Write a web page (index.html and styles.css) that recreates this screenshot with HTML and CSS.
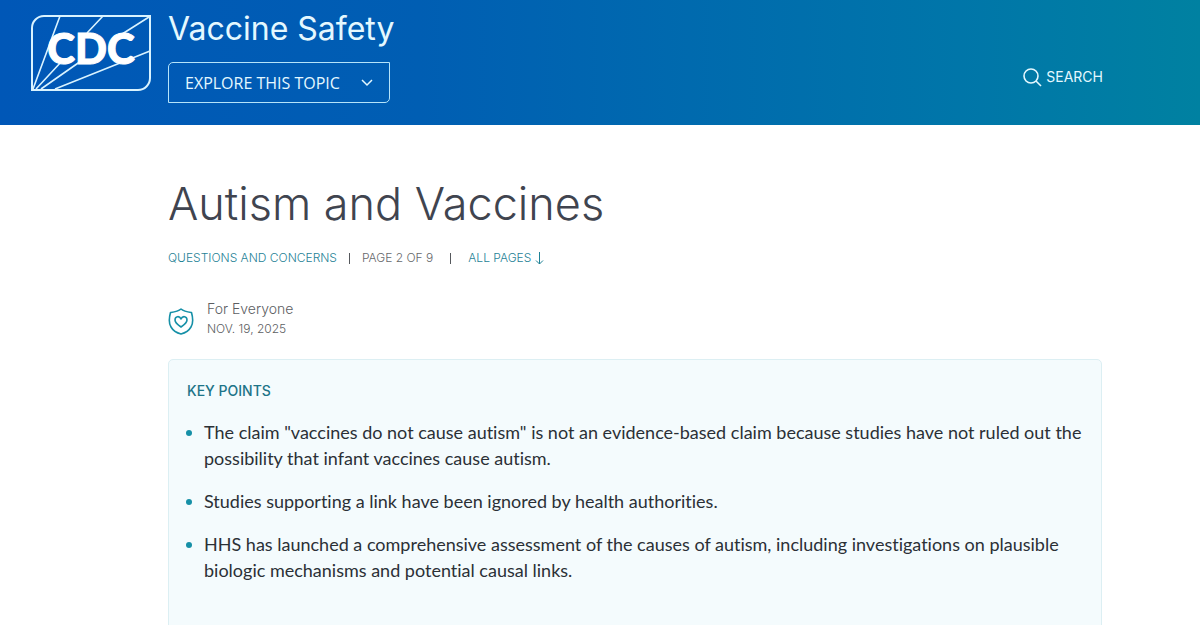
FILE: index.html
```
<!DOCTYPE html>
<html lang="en">

<head>
    <meta charset="UTF-8" />
    <meta name="viewport" content="width=device-width, initial-scale=1" />
    <title>Autism and Vaccines | Vaccine Safety | CDC</title>
    <link rel="stylesheet" href="styles.css">
</head>

<body>

    <header class="site-header">
        <a class="logo" href="#" aria-label="CDC home">
            <svg width="120" height="76" viewBox="0 0 120 76">
                <g fill="none" stroke="#d9f3ff" stroke-width="1.6">
                    <path d="M1 75V13A12 12 0 0 1 13 1H119V63A12 12 0 0 1 107 75Z" stroke-width="2" />
                    <path d="M2 74L29 1M5 74L31 46M56 18L72 1M10 74L50 46M88 21L118 2M24 74L119 36" />
                </g>
                <text class="logo-text" x="60" y="49" text-anchor="middle">CDC</text>
            </svg>
        </a>
        <div class="topic">
            <a class="topic-title" href="#">Vaccine Safety</a>
            <button class="explore" type="button">
                EXPLORE THIS TOPIC
                <svg width="12" height="8" viewBox="0 0 12 8" fill="none" stroke="currentColor" stroke-width="1.5">
                    <path d="M1 1L6 6L11 1" />
                </svg>
            </button>
        </div>
        <button class="search" type="button">
            <svg width="19" height="19" viewBox="0 0 19 19" fill="none" stroke="currentColor" stroke-width="1.6">
                <circle cx="8" cy="8" r="7" />
                <path d="M13 13L18 18" />
            </svg>
            SEARCH
        </button>
    </header>

    <main class="content">
        <h1>Autism and Vaccines</h1>

        <nav class="crumbs">
            <a href="#">QUESTIONS AND CONCERNS</a>
            <span class="bar"></span>
            <span>PAGE 2 OF 9</span>
            <span class="bar wide"></span>
            <a href="#">ALL PAGES
                <svg width="9" height="13" viewBox="0 0 9 13" fill="none" stroke="currentColor">
                    <path d="M4.5 0V12M1 8.5L4.5 12L8 8.5" />
                </svg>
            </a>
        </nav>

        <div class="audience">
            <svg width="26" height="28" viewBox="0 0 26 28" fill="none" stroke="#1690a7" stroke-width="1.6" stroke-linejoin="round">
                <path d="M13 2C10 4.500 6 5 2.500 5.500C1 11 0.500 16 3 20C5 23.500 9 26 13 27C17 26 21 23.500 23 20C25.500 16 25 11 23.500 5.500C20 5 16 4.500 13 2Z" />
                <path d="M13 20C10 18 7 16 7 13C7 9 11.500 8.500 13 12C14.500 8.500 19 9 19 13C19 16 16 18 13 20Z" />
            </svg>
            <div>
                <div class="group">For Everyone</div>
                <time datetime="2025-11-19">NOV. 19, 2025</time>
            </div>
        </div>

        <section class="key-points">
            <h2>KEY POINTS</h2>
            <ul>
                <li>The claim "vaccines do not cause autism" is not an evidence-based claim because studies have not ruled out the possibility that infant vaccines cause autism.</li>
                <li>Studies supporting a link have been ignored by health authorities.</li>
                <li>HHS has launched a comprehensive assessment of the causes of autism, including investigations on plausible biologic mechanisms and potential causal links.</li>
            </ul>
        </section>
    </main>

</body>

</html>
```
FILE: styles.css
```
* {
    box-sizing: border-box;
}

body {
    margin: 0;
    background: #fff;
    color: #2b3036;
    font-family: Lato, sans-serif;
    font-variant-ligatures: none;
}

a {
    color: #1f8296;
    text-decoration: none;
}

button {
    background: none;
    border: 0;
    padding: 0;
    color: #e4f8ff;
    font-family: Inter, sans-serif;
}

.site-header {
    display: flex;
    align-items: flex-start;
    padding: 11px 97px 22px 31px;
    background: linear-gradient(90deg, #0057b7 0%, #005eb3 35%, #0076a9 80%, #0081a1 100%);
}

.logo {
    display: flex;
    margin: 4px 17px 0 0;
}

.logo-text {
    fill: #fff;
    stroke: #fff;
    stroke-width: 1px;
    font: 900 42px Lato, sans-serif;
}

.topic {
    display: flex;
    flex-direction: column;
    align-items: flex-start;
    gap: 15px;
}

.topic-title {
    color: #e4f8ff;
    font: 32px/36px Inter, sans-serif;
}

.explore {
    display: flex;
    align-items: center;
    justify-content: space-between;
    gap: 21px;
    height: 41px;
    padding: 0 16px;
    border: 1px solid #b5e4fa;
    border-radius: 5px 0;
    font: 500 16px "Open Sans", sans-serif;
}

.search {
    display: flex;
    align-items: center;
    gap: 4px;
    margin: 56px 0 0 auto;
    font-size: 14px;
    line-height: 20px;
}

.content {
    margin: 0 98px 0 168px;
    padding-top: 51px;
}

h1 {
    margin: 0;
    color: #40444f;
    font: 300 45px/56px Inter, sans-serif;
}

.crumbs {
    display: flex;
    align-items: center;
    gap: 12px;
    margin-top: 16px;
    color: #66686b;
    font: 300 12px/20px Inter, sans-serif;
}

.crumbs svg {
    vertical-align: -3px;
}

.bar {
    width: 1px;
    height: 11px;
    background: #55585c;
}

.wide {
    margin: 0 5px;
}

.audience {
    display: flex;
    align-items: flex-end;
    gap: 13px;
    margin-top: 31px;
    color: #5c5e62;
    font: 300 12px/20px Inter, sans-serif;
}

.audience svg {
    margin-bottom: 4px;
}

.group {
    font-size: 14px;
}

.key-points {
    min-height: 280px;
    margin-top: 20px;
    padding: 21px 10px 21px 18px;
    background: #f4fbfd;
    border: 1px solid #dceff3;
    border-radius: 5px;
}

h2 {
    margin: 0;
    color: #1d7488;
    font: 500 14px/20px Inter, sans-serif;
}

ul {
    margin: 18px 0 0;
    padding: 0;
    list-style: none;
}

li {
    display: flex;
    align-items: flex-start;
    margin-bottom: 17px;
    font-size: 18px;
    line-height: 26px;
}

li::before {
    content: "";
    flex: none;
    width: 6px;
    height: 6px;
    margin: 11px 12px 0 -1px;
    border-radius: 50%;
    background: #1690a7;
}
```
